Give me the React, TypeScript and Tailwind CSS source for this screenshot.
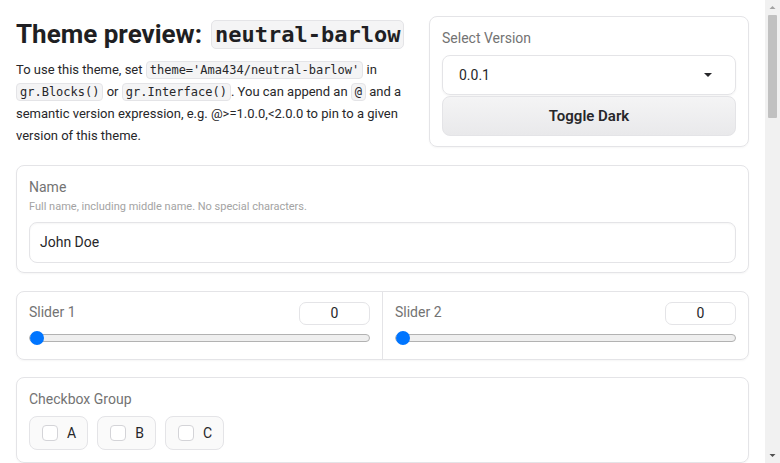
import { useState } from "react";

const sans = "font-['Roboto',sans-serif]";
const mono = "font-['DejaVu_Sans_Mono',monospace]";

const Code = ({ children }: { children: string }) => (
    <code className={`${mono} text-[12px] leading-[16px] inline-block bg-[#f4f4f5] border border-[#e4e4e7] rounded-[4px] px-[3px]`}>{children}</code>
);

const SliderBox = ({ label, className }: { label: string; className?: string }) => (
    <div className={`flex-1 px-[12px] pt-[10px] pb-[14px] ${className ?? ""}`}>
        <div className="flex items-start justify-between">
            <span className="text-[14px] leading-[20px] text-[#737373]">{label}</span>
            <div className="w-[71px] h-[23px] border border-[#e4e4e7] rounded-[7px] flex items-center justify-center text-[14px] text-[#27272a]">0</div>
        </div>
        <div className="relative mt-[6px] h-[14px] flex items-center">
            <div className="w-full h-[8px] rounded-full bg-[#efefef] border border-[#b2b2b2]" />
            <div className="absolute left-[1px] top-0 w-[14px] h-[14px] rounded-full bg-[#0075ff]" />
        </div>
    </div>
);

export default function App() {
    const [checked, setChecked] = useState<string[]>([])

    const toggle = (k: string) => {
        setChecked(checked.includes(k) ? checked.filter((c) => c !== k) : [...checked, k])
    }

    return (
        <div className={`${sans} bg-white text-[#27272a] h-[463px] overflow-hidden flex`}>
            <div className="flex-1 px-[16px] pt-[16px]">
                <div className="flex items-start gap-[16px]">
                    <div className="flex-1">
                        <h1 className="h-[37px] text-[26px] font-bold text-[#1f1f23] flex items-center whitespace-nowrap">
                            Theme preview:
                            <span className={`${mono} ml-[9px] text-[22px] bg-[#f4f4f5] border border-[#e4e4e7] rounded-[5px] px-[3px] leading-[27px]`}>neutral-barlow</span>
                        </h1>
                        <p className="mt-[6px] text-[13px] leading-[22px] text-[#27272a]">
                            To use this theme, set <Code>theme='Ama434/neutral-barlow'</Code> in{" "}
                            <Code>gr.Blocks()</Code> or <Code>gr.Interface()</Code>. You can append an <Code>@</Code> and a
                            semantic version expression, e.g. @&gt;=1.0.0,&lt;2.0.0 to pin to a given version of this theme.
                        </p>
                    </div>
                    <div className="w-[320px] shrink-0 border border-[#e4e4e7] rounded-[8px] px-[12px] pt-[12px] pb-[10px] shadow-[0_1px_2px_rgba(0,0,0,0.04)]">
                        <div className="text-[14px] text-[#737373] leading-[18px]">Select Version</div>
                        <div className="mt-[8px] h-[40px] border border-[#e4e4e7] rounded-[8px] flex items-center justify-between pl-[16px] pr-[23px] text-[14px] shadow-[0_1px_2px_rgba(0,0,0,0.05)]">
                            <span>0.0.1</span>
                            <svg width="8" height="4" viewBox="0 0 8 4"><path d="M0 0h8L4 4z" fill="#27272a" /></svg>
                        </div>
                        <button className="mt-[1px] w-full h-[40px] rounded-[8px] border border-[#e4e4e7] bg-gradient-to-b from-[#f4f4f5] to-[#e9e9eb] text-[15px] font-semibold text-[#27272a]">
                            Toggle Dark
                        </button>
                    </div>
                </div>

                <div className="mt-[18px] border border-[#e4e4e7] rounded-[8px] px-[12px] pt-[12px] pb-[9px] shadow-[0_1px_2px_rgba(0,0,0,0.04)]">
                    <div className="text-[14px] text-[#737373] leading-[18px]">Name</div>
                    <div className="text-[11px] text-[#a3a3a3] leading-[16px] mt-[3px]">Full name, including middle name. No special characters.</div>
                    <div className="mt-[7px] h-[41px] border border-[#e4e4e7] rounded-[8px] flex items-center px-[10px] text-[14px] shadow-[inset_0_1px_2px_rgba(0,0,0,0.04)]">
                        John Doe
                    </div>
                </div>

                <div className="mt-[18px] border border-[#e4e4e7] rounded-[8px] flex shadow-[0_1px_2px_rgba(0,0,0,0.04)]">
                    <SliderBox label="Slider 1" className="border-r border-[#e4e4e7]" />
                    <SliderBox label="Slider 2" />
                </div>

                <div className="mt-[17px] border border-[#e4e4e7] rounded-[8px] px-[12px] pt-[11px] pb-[12px] shadow-[0_1px_2px_rgba(0,0,0,0.04)]">
                    <div className="text-[14px] text-[#737373] leading-[20px]">Checkbox Group</div>
                    <div className="mt-[7px] flex gap-[9px]">
                        {["A", "B", "C"].map((k) => (
                            <label key={k} onClick={() => toggle(k)} className="h-[34px] pl-[12px] pr-[11px] flex items-center gap-[9px] border border-[#e4e4e7] rounded-[8px] bg-[#fafafa] text-[14px] cursor-pointer">
                                <span className={`w-[16px] h-[16px] rounded-[4px] border border-[#d4d4d8] ${checked.includes(k) ? "bg-[#0075ff]" : "bg-white"}`} />
                                {k}
                            </label>
                        ))}
                    </div>
                </div>
            </div>

            {/* fake scrollbar */}
            <div className="w-[15px] shrink-0 bg-[#f1f1f1] flex flex-col items-center">
                <svg width="15" height="15" viewBox="0 0 15 15"><path d="M4.5 9h6L7.5 6z" fill="#a3a3a3" /></svg>
                <div className="w-[9px] h-[103px] rounded-[1px] bg-[#c1c1c1]" />
                <div className="flex-1" />
                <svg width="15" height="15" viewBox="0 0 15 15"><path d="M4.5 6h6L7.5 9z" fill="#505050" /></svg>
            </div>
        </div>
    );
}
